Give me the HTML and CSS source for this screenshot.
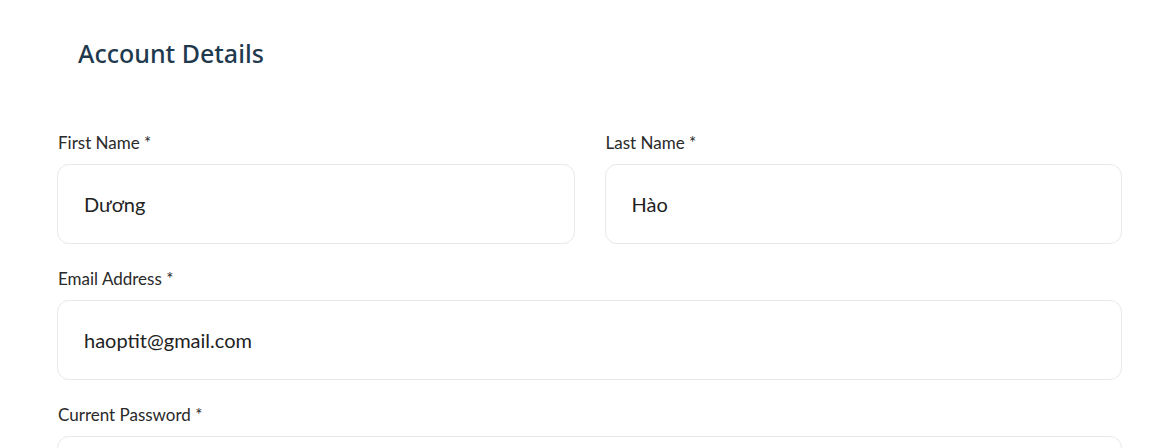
FILE: index.html
```html
<!DOCTYPE html>
<html lang="vi">
<head>
<meta charset="utf-8">
<link rel="stylesheet" href="styles.css">
</head>
<body>
<main class="page">
  <h2 class="title">Account Details</h2>
  <form class="form">
    <div class="row two">
      <div class="field">
        <label class="label">First Name *</label>
        <div class="input">Dương</div>
      </div>
      <div class="field">
        <label class="label">Last Name *</label>
        <div class="input">Hào</div>
      </div>
    </div>
    <div class="field">
      <label class="label">Email Address *</label>
      <div class="input">haoptit@gmail.com</div>
    </div>
    <div class="field">
      <label class="label">Current Password *</label>
      <div class="input"></div>
    </div>
  </form>
</main>
</body>
</html>
```
FILE: styles.css
```css
html, body {
  margin: 0;
  padding: 0;
  background: #ffffff;
}
.page {
  padding: 37px 39px 0 57px;
  font-family: Lato, "Open Sans", sans-serif;
}
.title {
  margin: 0 0 63px 21px;
  font-family: "Noto Sans", Lato, sans-serif;
  font-weight: 500;
  font-size: 25px;
  line-height: 32px;
  color: #1f3a4e;
}
.form {
  display: flex;
  flex-direction: column;
  gap: 24px;
}
.row.two {
  display: grid;
  grid-template-columns: 1fr 1fr;
  gap: 30px;
}
.field {
  display: flex;
  flex-direction: column;
  gap: 11px;
}
.label {
  font-size: 17px;
  line-height: 20px;
  color: #2a2a2a;
  padding: 1px 0 0 1px;
}
.input {
  box-sizing: border-box;
  height: 80px;
  border: 1px solid #e8e8e8;
  border-radius: 12px;
  padding: 0 26px;
  display: flex;
  align-items: center;
  font-size: 20px;
  color: #222;
}
```
